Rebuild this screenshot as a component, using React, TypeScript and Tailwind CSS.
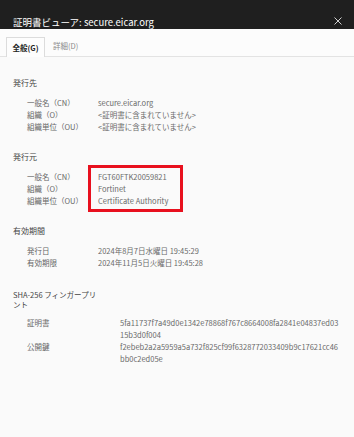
import React from "react";

const FONT = { fontFamily: '"Noto Sans CJK JP", "Noto Sans", sans-serif' };

function Row({ label, children, labelW = "w-[71px]" }: { label: string; children: React.ReactNode; labelW?: string }) {
  return (
    <div className="flex">
      <div className={`${labelW} shrink-0 text-[#666]`}>{label}</div>
      <div className="text-[#6a6a6a]">{children}</div>
    </div>
  );
}

export default function App() {
  return (
    <div className="w-[354px] h-[437px] bg-[#fafafa] flex flex-col overflow-hidden" style={FONT}>
      <div className="h-[29px] bg-[#1f1f1f] flex items-start justify-between shrink-0">
        <div className="pl-[13px] pt-[15px] text-[9.5px] leading-[14px] text-white">証明書ビューア: secure.eicar.org</div>
        <svg className="mt-[17px] mr-[12px]" width="8" height="8" viewBox="0 0 8 8">
          <path d="M0.5 0.5 L7.5 7.5 M7.5 0.5 L0.5 7.5" stroke="#d0d0d0" strokeWidth="1" />
        </svg>
      </div>
      <div className="h-[28px] bg-[#fcfcfc] border-b border-[#e3e3e3] flex items-end pl-[6px] shrink-0">
        <div className="h-[20px] w-[39px] border border-b-0 border-[#dcdcdc] bg-[#fdfdfd] -mb-px flex items-center justify-center text-[7.5px] font-semibold text-[#222]">
          全般(G)
        </div>
        <div className="h-[20px] ml-[8px] flex items-center text-[7.5px] text-[#8a8a8a]">詳細(D)</div>
      </div>
      <div className="pl-[13px] pt-[20px] text-[7.5px] leading-[12px]">
        <div>
          <div className="text-[8px] text-[#444]">発行先</div>
          <div className="mt-[8px] ml-[14px]">
            <Row label="一般名（CN）">secure.eicar.org</Row>
            <Row label="組織（O）">&lt;証明書に含まれていません&gt;</Row>
            <Row label="組織単位（OU）">&lt;証明書に含まれていません&gt;</Row>
          </div>
        </div>
        <div className="mt-[18px]">
          <div className="text-[8px] text-[#444]">発行元</div>
          <div className="mt-[8px] ml-[14px] flex">
            <div className="w-[71px] shrink-0 text-[#666]">
              <div>一般名（CN）</div>
              <div>組織（O）</div>
              <div>組織単位（OU）</div>
            </div>
            <div className="relative text-[#6a6a6a]">
              <div>FGT60FTK20059821</div>
              <div>Fortinet</div>
              <div>Certificate Authority</div>
              <div className="absolute left-[-10px] top-[-6px] w-[95px] h-[47px] border-[3px] border-[#e8101e]" />
            </div>
          </div>
        </div>
        <div className="mt-[18px]">
          <div className="text-[8px] text-[#444]">有効期間</div>
          <div className="mt-[8px] ml-[14px]">
            <Row label="発行日">2024年8月7日水曜日 19:45:29</Row>
            <Row label="有効期限">2024年11月5日火曜日 19:45:28</Row>
          </div>
        </div>
        <div className="mt-[21px]">
          <div className="text-[7.5px] leading-[10px] text-[#444] w-[90px]">
            <div>SHA-256 フィンガープリ</div>
            <div>ント</div>
          </div>
          <div className="mt-[7px] ml-[14px]">
            <Row label="証明書" labelW="w-[93px]">
              <div>5fa11737f7a49d0e1342e78868f767c8664008fa2841e04837ed03</div>
              <div>15b3d0f004</div>
            </Row>
            <Row label="公開鍵" labelW="w-[93px]">
              <div>f2ebeb2a2a5959a5a732f825cf99f6328772033409b9c17621cc46</div>
              <div>bb0c2ed05e</div>
            </Row>
          </div>
        </div>
      </div>
    </div>
  );
}
